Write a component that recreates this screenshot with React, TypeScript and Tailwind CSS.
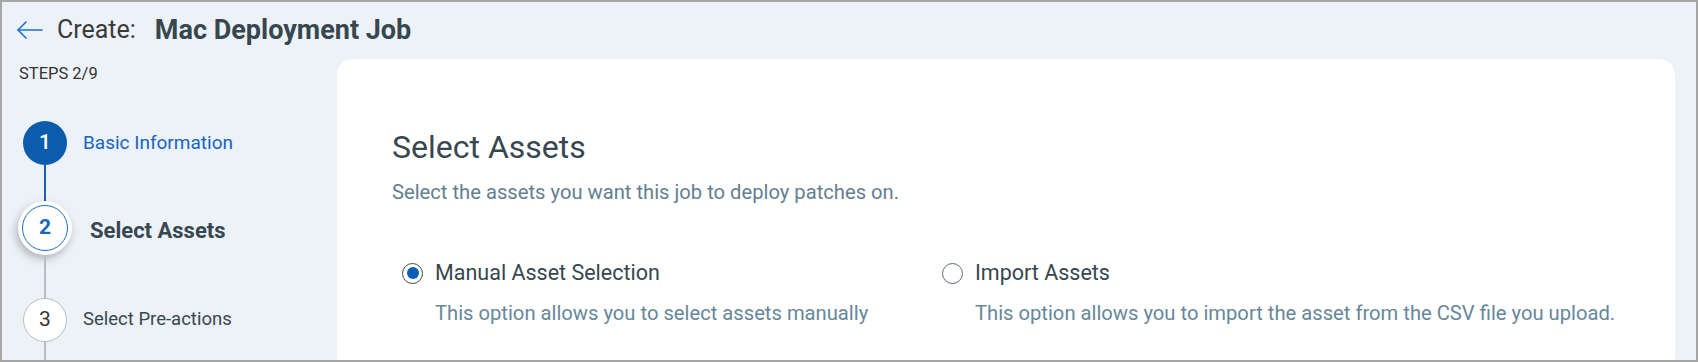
import React from "react";

function Radio({ checked }: { checked: boolean }) {
  return (
    <span
      className={
        "flex h-[21px] w-[21px] shrink-0 items-center justify-center rounded-full border-[1.5px] bg-white " +
        (checked ? "border-[#37474f]" : "border-[#546e7a]")
      }
    >
      {checked && <span className="h-[12px] w-[12px] rounded-full bg-[#0b5fb5]" />}
    </span>
  );
}

function Option({ checked, label, desc, width }: { checked: boolean; label: string; desc: string; width?: string }) {
  return (
    <div className={"flex flex-col " + (width ?? "")}>
      <div className="flex items-center gap-[12px]">
        <Radio checked={checked} />
        <span className="text-[21.5px] leading-[28px] text-[#37474f]">{label}</span>
      </div>
      <div className="mt-[13px] pl-[33px] text-[20.2px] leading-[26px] text-[#67879a]">{desc}</div>
    </div>
  );
}

export default function App() {
  return (
    <div
      className="flex h-[362px] w-[1698px] flex-col overflow-hidden border-2 border-[#a6a6a6] bg-[#edf2f9]"
      style={{ fontFamily: "Roboto, 'Liberation Sans', sans-serif" }}
    >
      {/* Header */}
      <div className="flex h-[52px] shrink-0 items-center pl-[15px] pt-[4px]">
        <svg width="26" height="20" viewBox="0 0 26 20" fill="none" stroke="#1a6fc9" strokeWidth="1.6" strokeLinecap="round" strokeLinejoin="round">
          <path d="M1 10 H25" />
          <path d="M9 2 L1 10 L9 18" />
        </svg>
        <span className="ml-[14px] text-[25px] leading-[32px] text-[#3a3a3a]">Create:</span>
        <span className="ml-[19px] text-[27px] font-bold leading-[32px] text-[#37474f]">Mac Deployment Job</span>
      </div>

      {/* Body */}
      <div className="flex min-h-0 flex-1">
        {/* Sidebar */}
        <div className="flex w-[335px] shrink-0 flex-col">
          <div className="mt-[9px] pl-[17px] text-[16.5px] leading-[22px] text-[#333]">STEPS 2/9</div>
          <div className="mt-[36px] flex flex-col pl-[16px]">
            {/* Step 1 */}
            <div className="flex items-center">
              <div className="flex w-[54px] justify-center">
                <div className="flex h-[44px] w-[44px] items-center justify-center rounded-full bg-[#0b5cad] text-[21px] font-medium text-white">
                  1
                </div>
              </div>
              <span className="ml-[11px] text-[19px] text-[#1565c0]">Basic Information</span>
            </div>
            <div className="flex w-[54px] justify-center">
              <div className="h-[36px] w-[2px] bg-[#1b5fae]" />
            </div>
            {/* Step 2 */}
            <div className="flex items-center">
              <div className="flex w-[54px] justify-center">
                <div className="flex h-[54px] w-[54px] items-center justify-center rounded-full bg-white shadow-[-2px_4px_8px_rgba(0,0,0,0.25)]">
                  <div className="flex h-[46px] w-[46px] items-center justify-center rounded-full border border-[#1f6ec0] text-[21px] font-bold text-[#1565c0]">
                    2
                  </div>
                </div>
              </div>
              <span className="ml-[18px] mt-[4px] text-[22px] font-bold text-[#37474f]">Select Assets</span>
            </div>
            <div className="flex w-[54px] justify-center">
              <div className="h-[43px] w-[2px] bg-[#b0bec5]" />
            </div>
            {/* Step 3 */}
            <div className="flex items-center">
              <div className="flex w-[54px] justify-center">
                <div className="flex h-[44px] w-[44px] items-center justify-center rounded-full border border-[#b0bec5] bg-white text-[21px] text-[#333]">
                  3
                </div>
              </div>
              <span className="ml-[11px] text-[18.5px] text-[#37474f]">Select Pre-actions</span>
            </div>
            <div className="flex w-[54px] justify-center">
              <div className="h-[40px] w-[2px] bg-[#b0bec5]" />
            </div>
          </div>
        </div>

        {/* Card */}
        <div className="mr-[21px] mt-[5px] flex-1 rounded-t-[16px] bg-white pl-[55px] pt-[68px]">
          <h1 className="text-[32px] leading-[40px] text-[#37474f]">Select Assets</h1>
          <p className="mt-[12px] text-[20.2px] leading-[26px] text-[#637f91]">
            Select the assets you want this job to deploy patches on.
          </p>
          <div className="mt-[54px] flex pl-[10px]">
            <Option
              checked
              width="w-[540px]"
              label="Manual Asset Selection"
              desc="This option allows you to select assets manually"
            />
            <Option
              checked={false}
              label="Import Assets"
              desc="This option allows you to import the asset from the CSV file you upload."
            />
          </div>
        </div>
      </div>
    </div>
  );
}
